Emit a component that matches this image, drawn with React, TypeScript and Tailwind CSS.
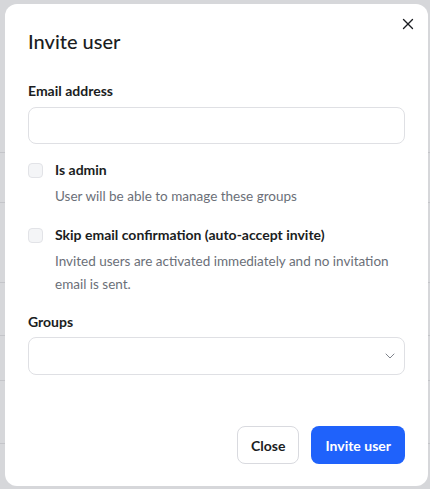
import React, { useState } from "react";
import { X, ChevronDown } from "lucide-react";

const font = { fontFamily: 'Lato, "Noto Sans", Arial, sans-serif' };

const CheckRow: React.FC<{ label: string; help: string }> = ({ label, help }) => {
  const [checked, setChecked] = useState(false);
  return (
    <div className="flex gap-3">
      <button
        type="button"
        onClick={() => setChecked(!checked)}
        className="mt-[4px] w-[15px] h-[15px] shrink-0 rounded-[4px] border border-[#e2e3e7] bg-[#f4f5f7]"
      />
      <div className="w-[340px]">
        <div className="text-[14px] font-bold text-[#1b1d22] leading-[22px]">{label}</div>
        <p className="mt-[4px] text-[13.5px] text-[#6b6f78] leading-[23px]">{help}</p>
      </div>
    </div>
  );
};

export default function App() {
  return (
    <div className="w-[430px] h-[489px] bg-[#d6d7da] relative overflow-hidden" style={font}>
      {/* page rows behind the overlay */}
      <div className="absolute left-0 top-[152px] w-full border-t border-[#c4c5c9]" />
      <div className="absolute left-0 top-[202px] w-full border-t border-[#c4c5c9]" />
      <div className="absolute left-0 top-[282px] w-full border-t border-[#c4c5c9]" />
      <div className="absolute left-0 top-[335px] w-full border-t border-[#c4c5c9]" />
      <div className="absolute left-0 top-[380px] w-full border-t border-[#c4c5c9]" />
      <div className="absolute left-0 top-[443px] w-full border-t border-[#c4c5c9]" />

      <div className="relative ml-[5px] mt-[4px] w-[423px] h-[482px] bg-white rounded-[12px] px-[23px] pt-[23px] flex flex-col">
        <button className="absolute right-[11px] top-[11px] text-[#1b1d22]">
          <X className="w-[18px] h-[18px]" strokeWidth={1.8} />
        </button>

        <h2 className="text-[20px] font-medium text-[#1b1d22] leading-[28px]">Invite user</h2>

        <label className="mt-[26px] text-[14px] font-bold text-[#1b1d22] leading-[20px]">Email address</label>
        <input
          type="email"
          className="mt-[6px] h-[37px] w-full rounded-[8px] border border-[#dfe0e4] px-3 text-[14px] outline-none"
        />

        <div className="mt-[15px] flex flex-col gap-[16px]">
          <CheckRow label="Is admin" help="User will be able to manage these groups" />
          <CheckRow
            label="Skip email confirmation (auto-accept invite)"
            help="Invited users are activated immediately and no invitation email is sent."
          />
        </div>

        <label className="mt-[16px] text-[14px] font-bold text-[#1b1d22] leading-[20px]">Groups</label>
        <div className="mt-[5px] h-[38px] w-full rounded-[8px] border border-[#dfe0e4] flex items-center justify-end pr-[6px]">
          <ChevronDown className="w-[16px] h-[16px] text-[#6b6f78]" strokeWidth={1.3} />
        </div>

        <div className="mt-auto mb-[22px] flex justify-end gap-[12px]">
          <button className="h-[38px] px-[13px] rounded-[8px] border border-[#d9dadf] bg-white text-[14px] font-bold text-[#1b1d22]">
            Close
          </button>
          <button className="h-[38px] px-[14px] rounded-[8px] bg-[#1f62fb] text-[14px] font-bold text-white">
            Invite user
          </button>
        </div>
      </div>
    </div>
  );
}
